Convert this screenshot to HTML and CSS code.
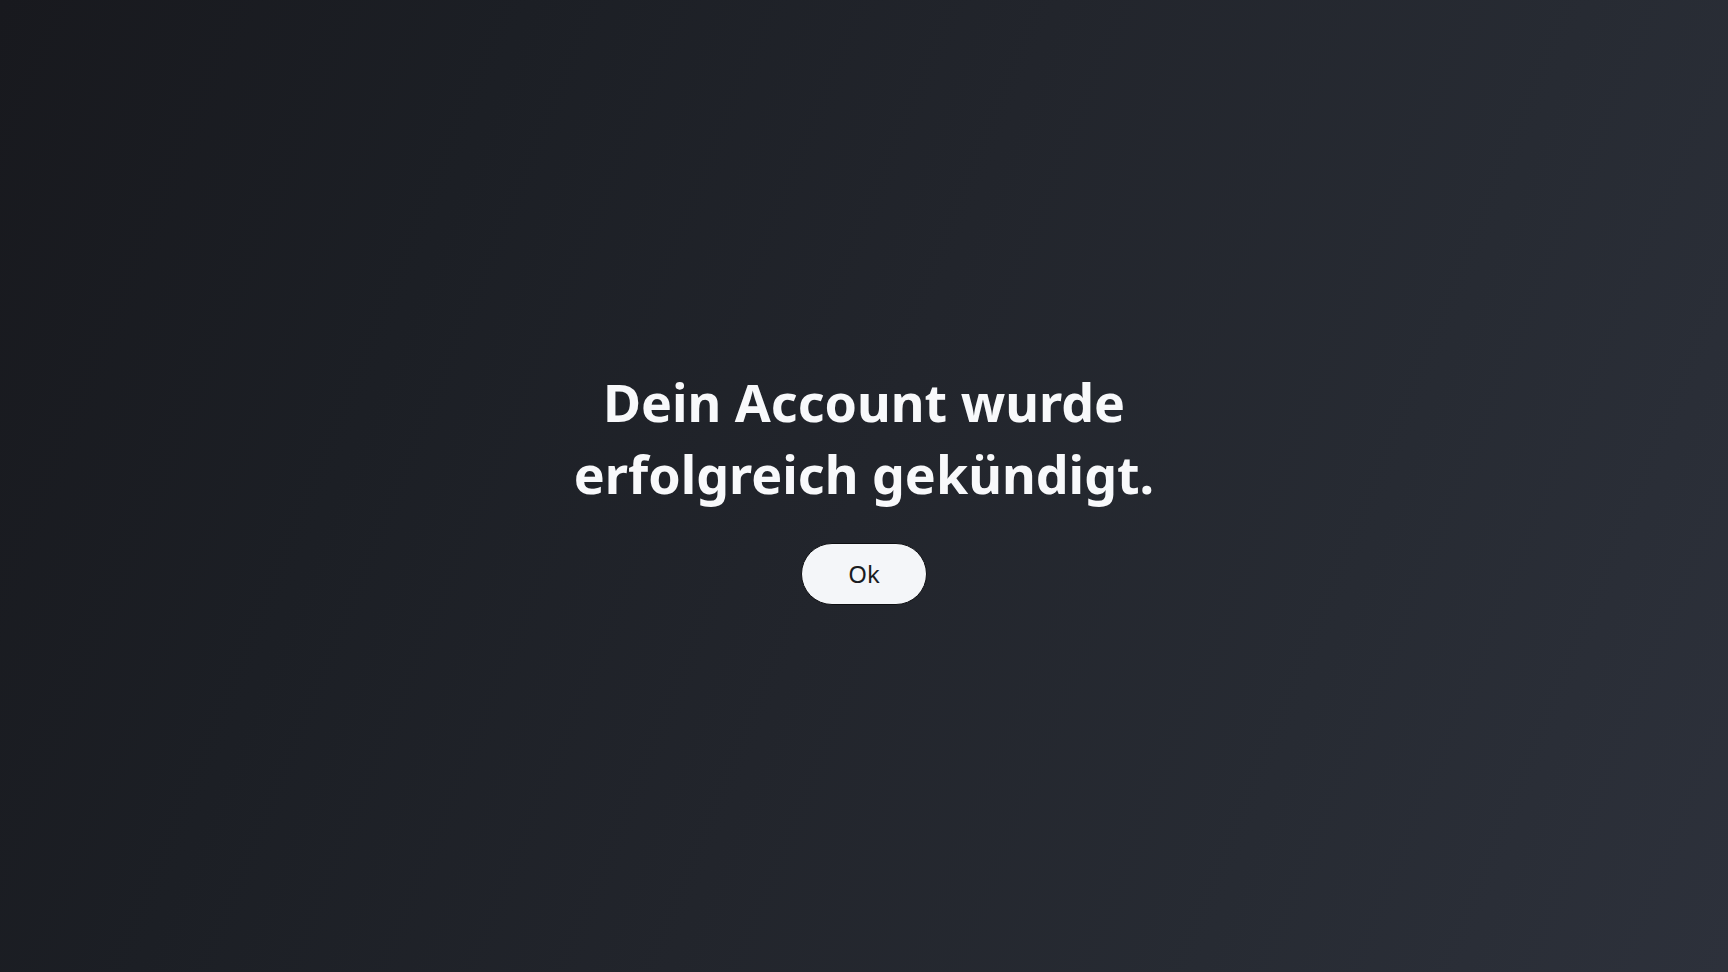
FILE: index.html
```html
<!DOCTYPE html>
<html lang="de">
<head>
<meta charset="utf-8">
<title>Account gekündigt</title>
<link rel="stylesheet" href="styles.css">
</head>
<body>
<main class="screen">
  <section class="message">
    <h1 class="title">Dein Account wurde<br>erfolgreich gekündigt.</h1>
    <button class="ok-button" type="button">Ok</button>
  </section>
</main>
</body>
</html>
```
FILE: styles.css
```css
html, body {
  margin: 0;
  padding: 0;
  height: 100%;
}

body {
  font-family: "Noto Sans", "Open Sans", sans-serif;
  background: #1e2127;
}

.screen {
  width: 100%;
  height: 100vh;
  display: flex;
  align-items: center;
  justify-content: center;
  background: linear-gradient(112deg, #18191e 0%, #1c1f25 25%, #22252c 50%, #272b33 75%, #2d313b 100%);
}

.message {
  display: flex;
  flex-direction: column;
  align-items: center;
  gap: 33px;
  margin-top: -2px;
}

.title {
  margin: 0;
  color: #f8f9fb;
  font-size: 52px;
  font-weight: 700;
  line-height: 72px;
  text-align: center;
  letter-spacing: 0;
}

.ok-button {
  font-family: "Noto Sans", "Open Sans", sans-serif;
  font-size: 24px;
  font-weight: 400;
  color: #1a1c21;
  background: #f4f6f9;
  border: 1px solid #0e0f12;
  border-radius: 999px;
  height: 62px;
  padding: 0 46px;
  line-height: 60px;
  cursor: pointer;
}
```
